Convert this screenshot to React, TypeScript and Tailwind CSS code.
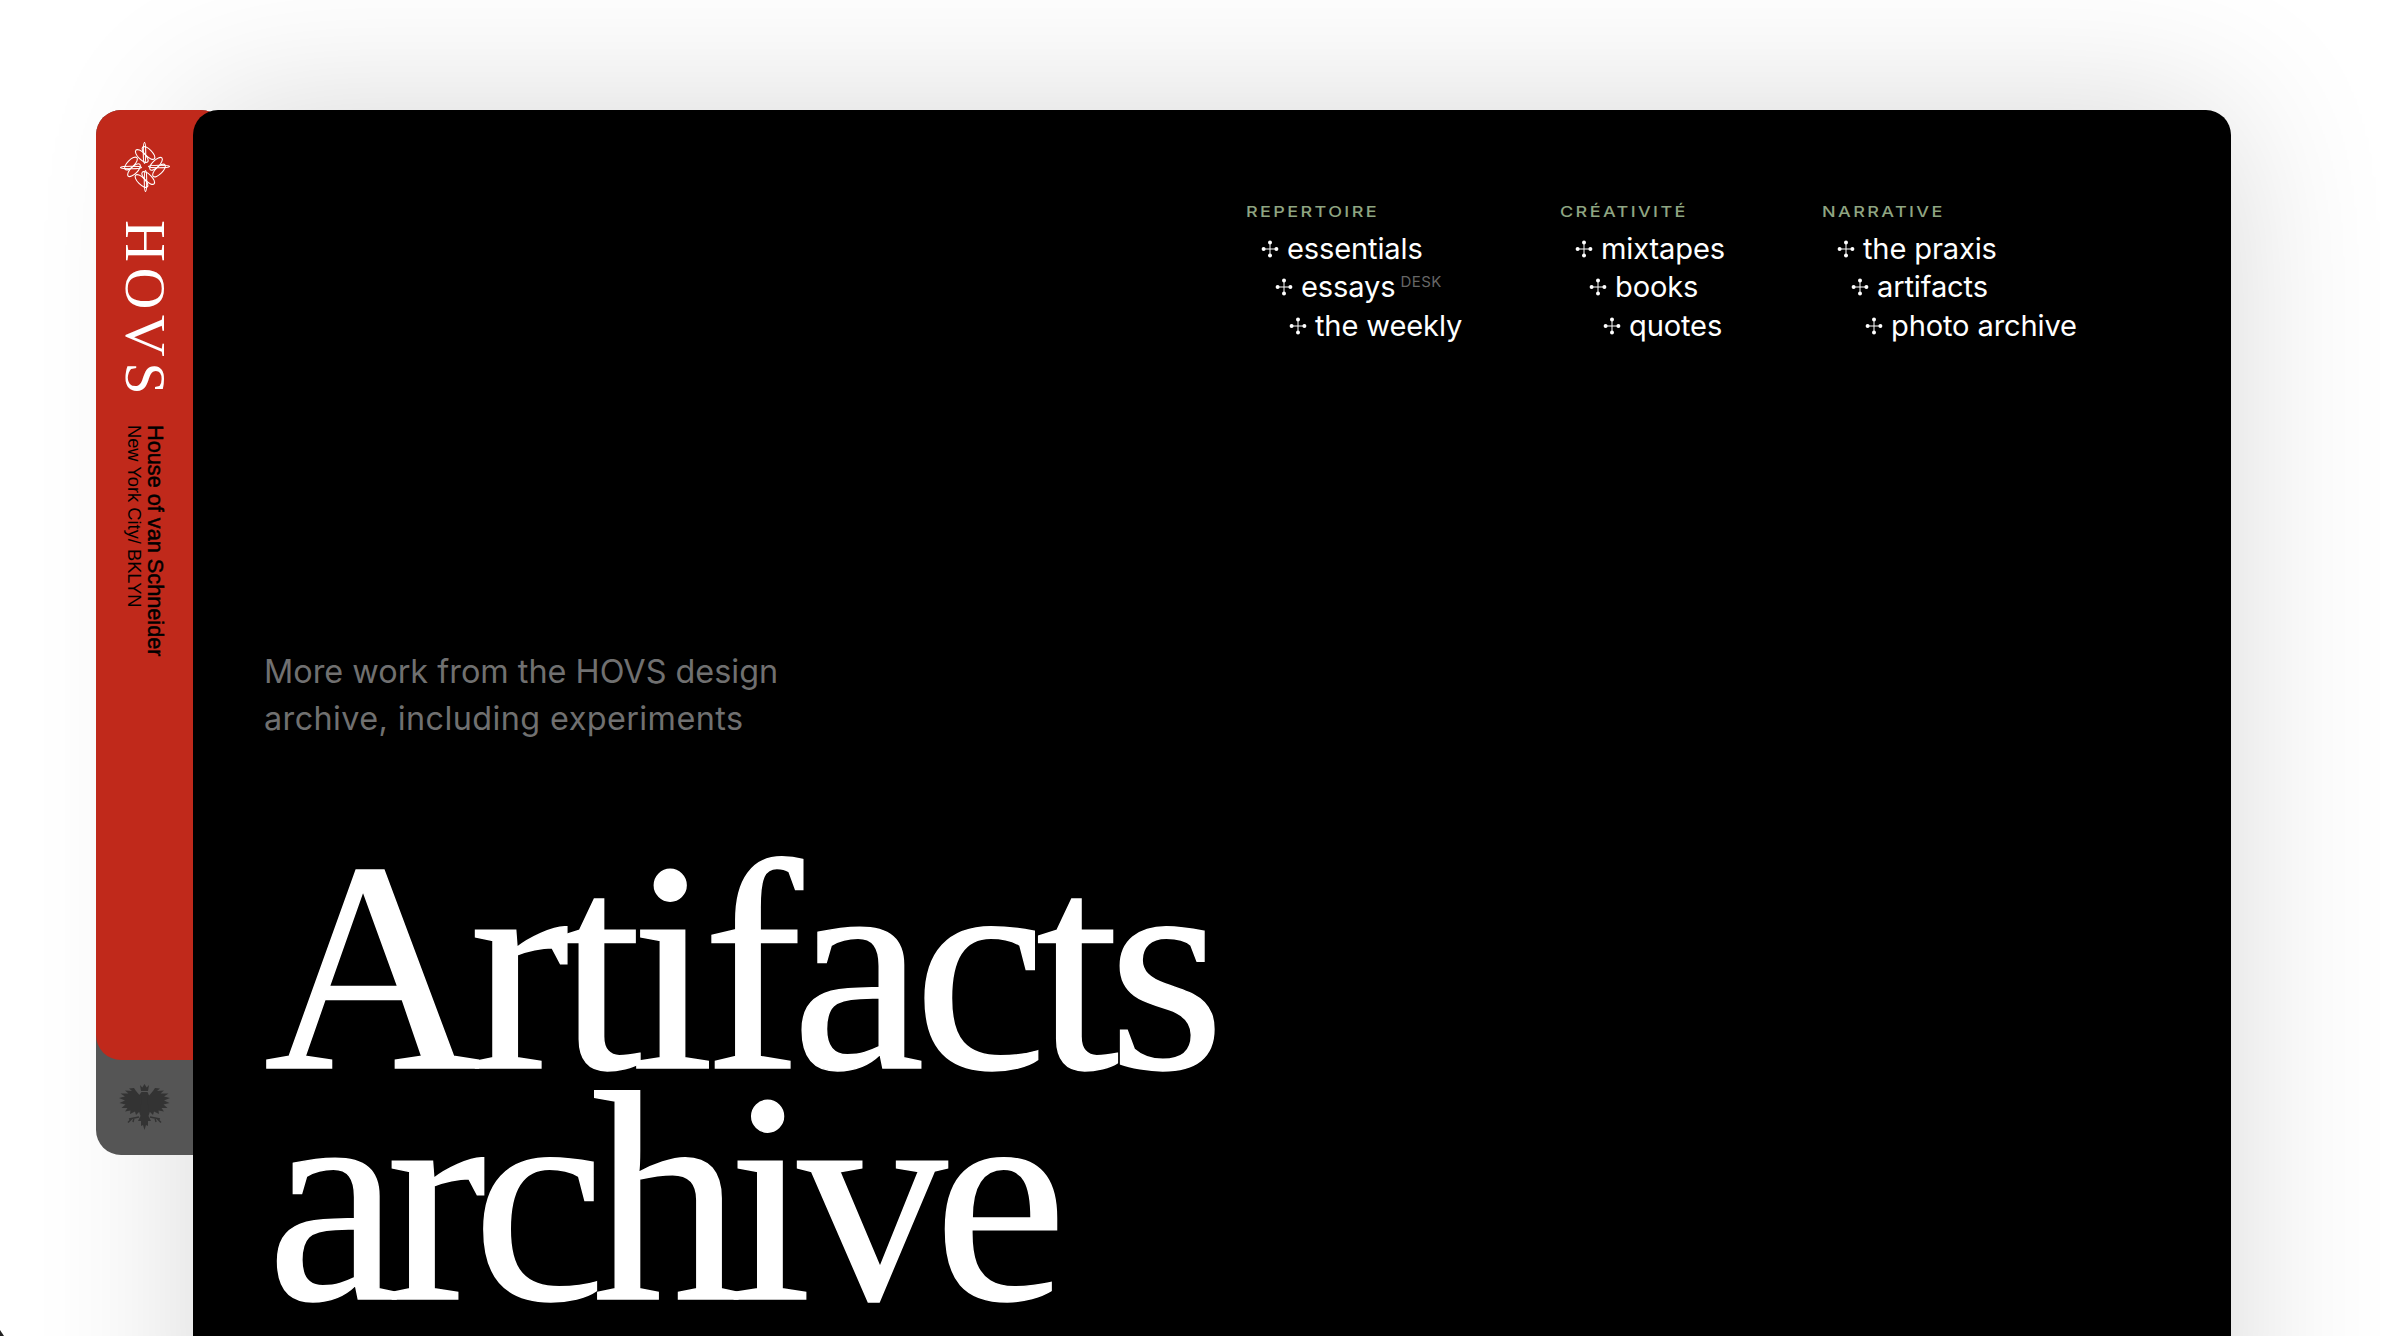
const serif = "font-['Liberation_Serif',serif]";
const sans = "font-['Inter',sans-serif]";

function Clover() {
  return (
    <svg width="18" height="18" viewBox="0 0 18 18" className="shrink-0 text-white" fill="currentColor">
      <path d="M9 3V15M3 9H15" stroke="currentColor" strokeWidth="1" />
      <circle cx="9" cy="2.600" r="2" />
      <circle cx="9" cy="15.400" r="2" />
      <circle cx="2.600" cy="9" r="2" />
      <circle cx="15.400" cy="9" r="2" />
    </svg>
  );
}

function Ornament() {
  const arm = (
    <g fill="none" stroke="currentColor" strokeWidth="1.100">
      <ellipse cx="-3.200" cy="-11" rx="3.500" ry="8.300" transform="rotate(-45 -3.200 -11)" />
      <ellipse cx="3.500" cy="-14" rx="3.500" ry="8.300" transform="rotate(-45 3.500 -14)" />
      <ellipse cx="-0.500" cy="-14" rx="1.200" ry="10.500" />
    </g>
  );
  return (
    <svg width="50" height="50" viewBox="-25 -25 50 50" className="text-white">
      {arm}
      <g transform="rotate(90)">{arm}</g>
      <g transform="rotate(180)">{arm}</g>
      <g transform="rotate(270)">{arm}</g>
    </svg>
  );
}

function Eagle() {
  const wing = (
    <g>
      <path d="M27 18L21 11L19 8L14 8.500L17 11L10 10.500L13.500 13.500L5.500 13.500L10 16.500L4 18L10 20.500L4.500 23L10.500 24.500L6.500 28L12.500 28L10 31.500L15.500 30.500L15 34L20 31.500L21 35L25 31Z" />
      <path d="M24 37L14 39M17 38.500L13 42.500M19 38L18 42" stroke="#333333" strokeWidth="1.400" fill="none" />
    </g>
  );
  return (
    <svg width="60" height="60" viewBox="0 0 60 60" fill="#333333">
      <path d="M25 5L27.300 7.500L29.500 4L31.700 7.500L34 5L33 11H26Z" />
      <path d="M26.500 12H32.500L34 15.500L33.500 22L35.500 30L33.500 36L36 41L33 41L33 46L31 45L29.500 50L28 45L26 46L26 41L23 41L25.500 36L23.500 30L25.500 22L26 17L23.500 16Z" />
      {wing}
      <g transform="translate(59 0) scale(-1 1)">{wing}</g>
    </svg>
  );
}

function NavItem({ label, indent, sup }: { label: string; indent: string; sup?: string }) {
  return (
    <li className={`flex items-center gap-[8px] h-[38.300px] ${indent}`}>
      <Clover />
      <span>{label}</span>
      {sup && <span className="self-start mt-[4px] -ml-[3px] text-[15px] leading-[20px] tracking-[0.03em] text-[#666666]">{sup}</span>}
    </li>
  );
}

function NavGroup({ title, items, width, sup }: { title: string; items: string[]; width: string; sup?: boolean }) {
  return (
    <div className={`${width} shrink-0`}>
      <div className="origin-left scale-x-[1.2] text-[15px] leading-[20px] font-medium tracking-[0.133em] text-[#8fa582] mb-[8px]">{title}</div>
      <ul className="text-[29.100px] leading-[38px] text-white tracking-[-0.005em]">
        <NavItem label={items[0]} indent="pl-[15px]" />
        <NavItem label={items[1]} indent="pl-[29px]" sup={sup ? "DESK" : undefined} />
        <NavItem label={items[2]} indent="pl-[43px]" />
      </ul>
    </div>
  );
}

export default function App() {
  return (
    <div className={`h-[1336px] w-[2401px] overflow-hidden bg-white pt-[110px] pl-[96px] flex items-start relative ${sans}`}>
      <div className="absolute left-[193px] top-[110px] w-[2038px] h-[1400px] rounded-t-[25px] shadow-[0_0_160px_rgba(0,0,0,0.16)]" />
      <aside className="relative z-10 shrink-0 w-[130px] -mr-[33px] h-[1045px] bg-[#555555] rounded-[25px]">
        <div className="h-[950px] bg-[#c0291b] rounded-[25px] rounded-br-none flex flex-col items-start pt-[32px]">
          <div className="w-[97px] flex flex-col items-center">
            <Ornament />
            <div className={`${serif} mt-[28px] [writing-mode:vertical-rl] text-[58px] leading-[58px] tracking-[0.095em] text-white`}>HOVS</div>
            <div className="mt-[25px] [writing-mode:vertical-rl] font-['Liberation_Sans',sans-serif] text-black text-[18.300px] leading-[21px]">
              <div className="text-[21.700px] [-webkit-text-stroke:0.5px_black]">House of van Schneider</div>
              <div>New York City/ BKLYN</div>
            </div>
          </div>
        </div>
        <div className="h-[95px] w-[97px] pt-[5px] flex items-center justify-center">
          <Eagle />
        </div>
      </aside>
      <main className="relative z-20 w-[2038px] h-[1400px] shrink-0 bg-black rounded-t-[25px] pl-[71px] pt-[92px]">
        <nav className="flex ml-[982px]">
          <NavGroup title="REPERTOIRE" width="w-[314px]" sup items={["essentials", "essays", "the weekly"]} />
          <NavGroup title="CRÉATIVITÉ" width="w-[262px]" items={["mixtapes", "books", "quotes"]} />
          <NavGroup title="NARRATIVE" width="w-[300px]" items={["the praxis", "artifacts", "photo archive"]} />
        </nav>
        <p className="mt-[303px] text-[32.400px] leading-[47px] text-[#707070]">
          More work from the HOVS design<br /><span className="tracking-[0.4px]">archive, including experiments</span>
        </p>
        <h1 className={`${serif} mt-[110px] text-[300px] leading-[231px] tracking-[-0.037em] text-white [-webkit-text-stroke:1.5px_white]`}>
          Artifacts<br /><span className="ml-[3px] tracking-[-0.046em]">archive</span>
        </h1>
      </main>
      <svg width="4" height="6" viewBox="0 0 4 6" className="absolute left-0 bottom-0" fill="#222222">
        <path d="M0 0L4 6H0Z" />
      </svg>
    </div>
  );
}
